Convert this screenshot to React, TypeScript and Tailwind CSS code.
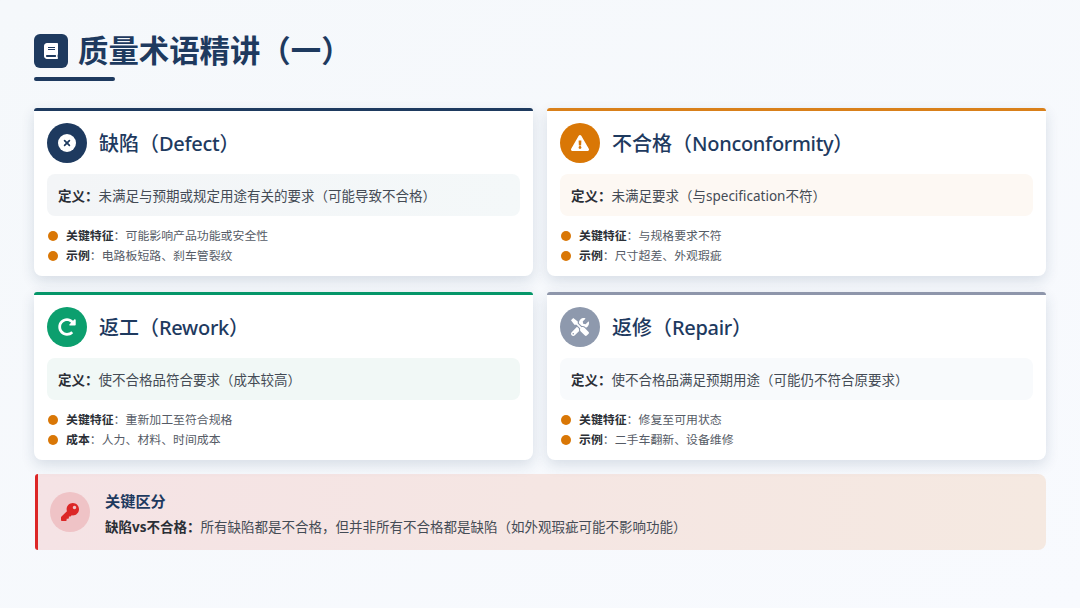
import { FaBook, FaExclamationTriangle, FaRedoAlt, FaTools, FaKey } from "react-icons/fa";
import type { ReactNode } from "react";

type CardProps = {
  bar: string;
  circle: string;
  defBg: string;
  icon: ReactNode;
  cn: string;
  en: string;
  def: ReactNode;
  items: [string, string][];
};

function Card({ bar, circle, defBg, icon, cn, en, def, items }: CardProps) {
  return (
    <div className="h-[168px] rounded-t-[3px] rounded-b-lg overflow-hidden bg-white shadow-[0_5px_14px_rgba(30,58,95,0.14)]">
      <div className={`h-[3px] ${bar}`} />
      <div className="pt-3 px-[13px]">
        <div className="flex items-center gap-3 h-10">
          <div className={`w-10 h-10 rounded-full flex items-center justify-center text-white text-[18px] ${circle}`}>{icon}</div>
          <h2 className="pt-0.5 text-[20px] leading-none font-medium text-[#1e3a5f]">
            {cn}（<span className="tracking-[-0.3px]">{en}</span>）
          </h2>
        </div>
        <div className={`mt-[11px] h-[42px] rounded-lg px-[11px] pt-0.5 flex items-center text-[13.5px] text-[#444b55] ${defBg}`}>
          <span><b className="font-bold text-[#2b2f36]">定义：</b>{def}</span>
        </div>
        <ul className="mt-[11px] flex flex-col gap-[3px]">
          {items.map(([k, v]) => (
            <li key={k} className="flex items-center gap-2 h-[17px] text-[11.9px] text-[#555b66]">
              <span className="w-2.5 h-2.5 ml-px rounded-full bg-[#d97706]" />
              <span><b className="font-bold text-[#2b2f36]">{k}</b>：{v}</span>
            </li>
          ))}
        </ul>
      </div>
    </div>
  );
}

function XCircle() {
  return (
    <svg width="18" height="18" viewBox="0 0 18 18" aria-hidden="true">
      <circle cx="9" cy="9" r="9" fill="#ffffff" />
      <path d="M6.6 6.6 11.4 11.4M11.4 6.6 6.6 11.4" stroke="#1e3a5f" strokeWidth="1.7" strokeLinecap="round" />
    </svg>
  );
}

export default function App() {
  return (
    <div
      className="w-[1080px] h-[608px] overflow-hidden bg-gradient-to-br from-[#f5f8fb] to-[#f8fafe] px-[34px] pt-[34px]"
      style={{ fontFamily: '"Noto Sans", "Noto Sans CJK SC", sans-serif' }}
    >
      <header className="flex items-center gap-[10px] h-[34px]">
        <div className="w-[34px] h-[34px] rounded-md bg-[#1e3a5f] flex items-center justify-center text-white text-[16px]">
          <FaBook />
        </div>
        <h1 className="text-[30.4px] leading-none font-bold text-[#1e3a5f]">质量术语精讲（一）</h1>
      </header>
      <div className="mt-[9px] w-[81px] h-[4px] rounded-sm bg-[#1e3a5f]" />
      <div className="mt-[27px] grid grid-cols-2 gap-x-[14px] gap-y-4 w-[1012px]">
        <Card
          bar="bg-[#1e3a5f]"
          circle="bg-[#1e3a5f]"
          defBg="bg-gradient-to-r from-[#f3f5f7] to-[#f4f8f9]"
          icon={<XCircle />}
          cn="缺陷"
          en="Defect"
          def="未满足与预期或规定用途有关的要求（可能导致不合格）"
          items={[["关键特征", "可能影响产品功能或安全性"], ["示例", "电路板短路、刹车管裂纹"]]}
        />
        <Card
          bar="bg-[#d9801a]"
          circle="bg-[#d97706]"
          defBg="bg-[#fdf8f3]"
          icon={<FaExclamationTriangle />}
          cn="不合格"
          en="Nonconformity"
          def="未满足要求（与specification不符）"
          items={[["关键特征", "与规格要求不符"], ["示例", "尺寸超差、外观瑕疵"]]}
        />
        <Card
          bar="bg-[#059669]"
          circle="bg-[#0c9f6e]"
          defBg="bg-[#f1f8f6]"
          icon={<FaRedoAlt />}
          cn="返工"
          en="Rework"
          def="使不合格品符合要求（成本较高）"
          items={[["关键特征", "重新加工至符合规格"], ["成本", "人力、材料、时间成本"]]}
        />
        <Card
          bar="bg-[#8e96ab]"
          circle="bg-[#8e99ad]"
          defBg="bg-[#f8fafc]"
          icon={<FaTools />}
          cn="返修"
          en="Repair"
          def="使不合格品满足预期用途（可能仍不符合原要求）"
          items={[["关键特征", "修复至可用状态"], ["示例", "二手车翻新、设备维修"]]}
        />
      </div>
      <div className="mt-[14px] ml-px h-[76px] rounded-l-[3px] rounded-r-lg border-l-[3px] border-[#dc2626] bg-gradient-to-r from-[#f5e3e5] to-[#f5e9e1] flex items-center gap-[15px] pl-[12px]">
        <div className="w-10 h-10 rounded-full bg-[#efc3c6] flex items-center justify-center text-[#dc2626] text-[18px]">
          <FaKey />
        </div>
        <div className="pt-[2px]">
          <div className="text-[15.2px] leading-5 font-bold text-[#1e3a5f]">关键区分</div>
          <div className="mt-[7px] text-[13.5px] leading-[18px] text-[#444b55]">
            <b className="font-bold text-[#2b2f36]">缺陷vs不合格：</b>所有缺陷都是不合格，但并非所有不合格都是缺陷（如外观瑕疵可能不影响功能）
          </div>
        </div>
      </div>
    </div>
  );
}
